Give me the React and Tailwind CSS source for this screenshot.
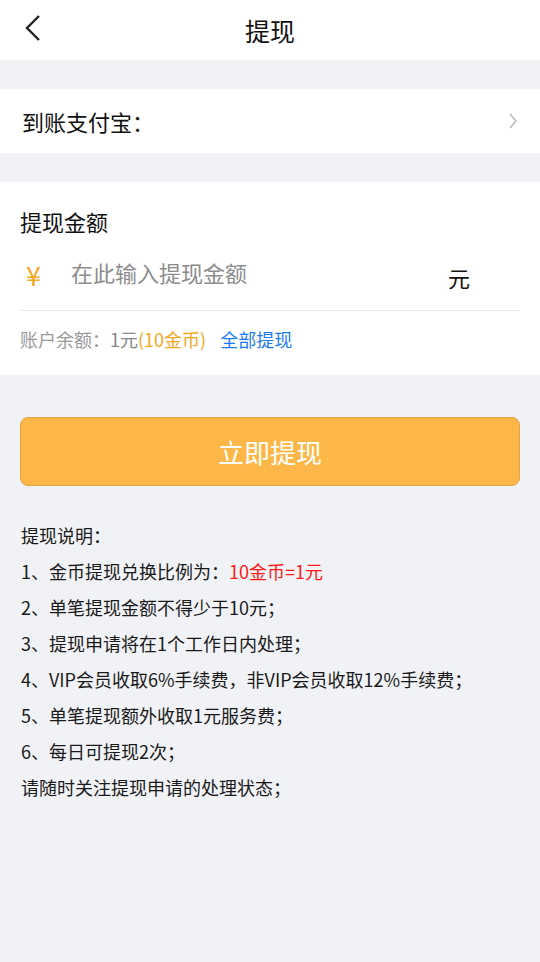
import React from "react";

const font = { fontFamily: '"Noto Sans CJK SC", "Noto Sans", sans-serif' };

export default function App() {
  const items = [
    <>1、金币提现兑换比例为：<span className="text-[#ff1a1a]">10金币=1元</span></>,
    <>2、单笔提现金额不得少于10元；</>,
    <>3、提现申请将在1个工作日内处理；</>,
    <>4、VIP会员收取6%手续费，非VIP会员收取12%手续费；</>,
    <>5、单笔提现额外收取1元服务费；</>,
    <>6、每日可提现2次；</>,
    <>请随时关注提现申请的处理状态；</>,
  ];
  return (
    <div className="w-[540px] h-[962px] bg-[#f1f2f6] flex flex-col" style={font}>
      {/* header */}
      <div className="h-[60px] bg-white relative flex items-center justify-center">
        <svg className="absolute left-[22px] top-[14px]" width="20" height="28" viewBox="0 0 20 28">
          <path d="M17 2 L5 14 L17 26" fill="none" stroke="#222" strokeWidth="2.4" />
        </svg>
        <span className="text-[25px] text-[#111] leading-none">提现</span>
      </div>

      {/* alipay row */}
      <div className="mt-[29px] h-[64px] bg-white flex items-center justify-between pl-[22px] pr-[22px]">
        <span className="text-[22px] text-[#111] leading-none">到账支付宝：</span>
        <svg width="10" height="18" viewBox="0 0 10 18">
          <path d="M2 2 L8 9 L2 16" fill="none" stroke="#b5b5b5" strokeWidth="1.3" />
        </svg>
      </div>

      {/* amount card */}
      <div className="mt-[29px] bg-white h-[193px] px-[20px] flex flex-col">
        <div className="pt-[24px] text-[22px] text-[#111] leading-[30px]">提现金额</div>
        <div className="flex items-center h-[75px] border-b border-[#e6e6e6]">
          <span className="w-[51px] pl-[6px] text-[27px] text-[#f5a623] leading-none mt-[2px]">¥</span>
          <span className="flex-1 text-[22px] text-[#8c8c8c] leading-none -mt-[3px]">在此输入提现金额</span>
          <span className="mr-[50px] text-[22px] text-[#111] leading-none mt-[7px]">元</span>
        </div>
        <div className="mt-[16px] text-[18px] leading-[24px] flex">
          <span className="text-[#9a9a9a]">账户余额：</span>
          <span className="text-[#888]">1元</span>
          <span className="text-[#f5a623]">(10金币)</span>
          <span className="ml-[14px] text-[#1a7cf5]">全部提现</span>
        </div>
      </div>

      {/* button */}
      <div className="px-[20px] mt-[42px]">
        <div className="h-[69px] rounded-[8px] bg-[#fdb748] border border-[#e3a43c] flex items-center justify-center">
          <span className="text-[26px] text-white leading-none">立即提现</span>
        </div>
      </div>

      {/* instructions */}
      <div className="px-[21px] mt-[31px] text-[18px] text-[#1a1a1a] leading-[36px]">
        <div>提现说明：</div>
        {items.map((it, i) => (
          <div key={i}>{it}</div>
        ))}
      </div>
    </div>
  );
}
